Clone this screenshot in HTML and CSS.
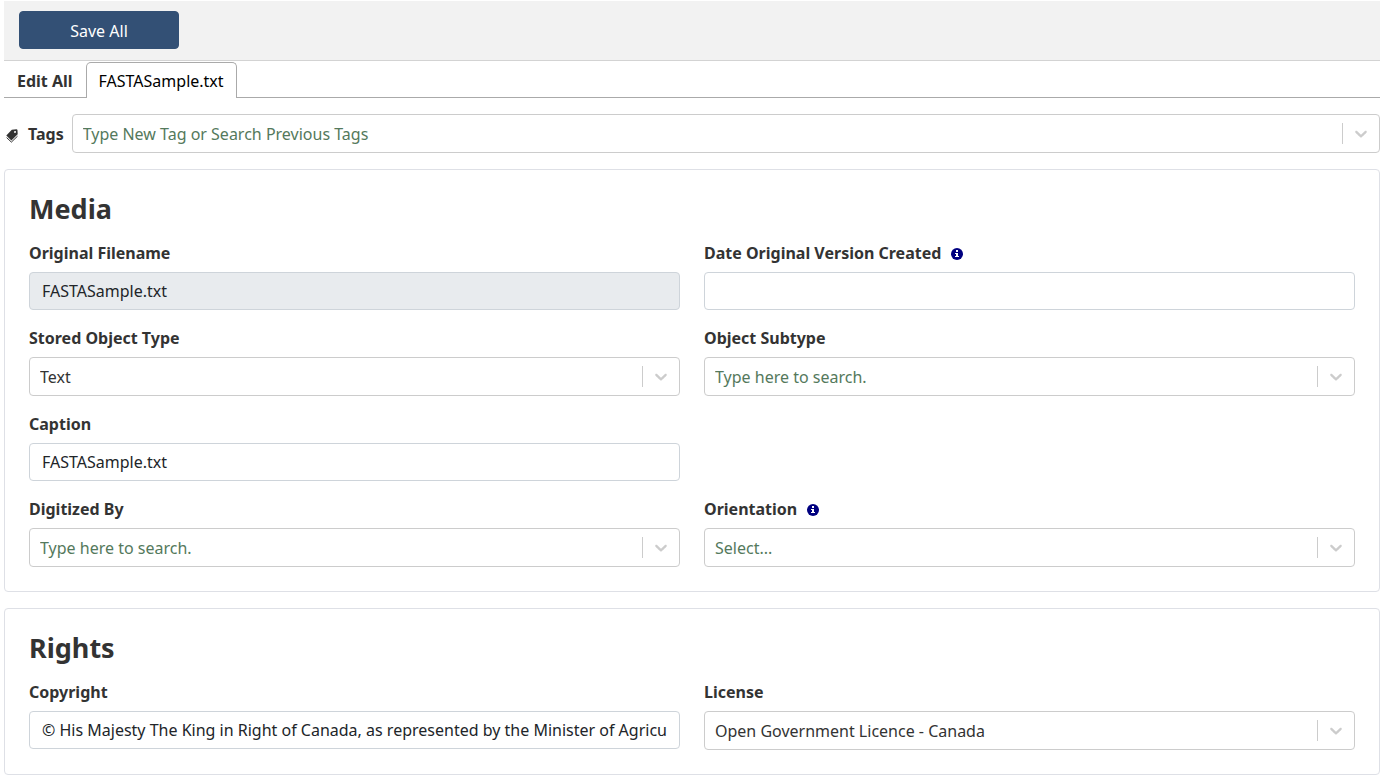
FILE: index.html
```
<!DOCTYPE html>
<html lang="en">
<head>
  <meta charset="utf-8">
  <meta name="viewport" content="width=device-width, initial-scale=1">
  <title>Edit Metadata</title>
  <link rel="stylesheet" href="styles.css">
</head>
<body>
  <svg class="sprite" aria-hidden="true">
    <symbol id="chevron" viewBox="0 0 20 20">
      <path d="M4.516 7.548c0.436-0.446 1.043-0.481 1.576 0l3.908 3.747 3.908-3.747c0.533-0.481 1.141-0.446 1.574 0 0.436 0.445 0.408 1.197 0 1.615-0.406 0.418-4.695 4.502-4.695 4.502-0.217 0.223-0.502 0.335-0.787 0.335s-0.57-0.112-0.789-0.335c0 0-4.287-4.084-4.695-4.502s-0.436-1.17 0-1.615z"/>
    </symbol>
    <symbol id="info" viewBox="0 0 12 12">
      <circle cx="6" cy="6" r="6" fill="#000080"/>
      <path d="M5 2h2v2H5zM4 5h3v3h1v1H4V8h1V6H4z" fill="#fff"/>
    </symbol>
  </svg>

  <header class="toolbar">
    <button class="save" type="button">Save All</button>
  </header>

  <main>
    <div class="tabs" role="tablist">
      <button class="tab tab-all" type="button" role="tab" aria-selected="false">Edit All</button>
      <button class="tab tab-active" type="button" role="tab" aria-selected="true">FASTASample.txt</button>
    </div>

    <div class="tags">
      <svg class="tag-icon" viewBox="0 0 12 14" aria-hidden="true">
        <path fill-rule="evenodd" d="M5.8.7 10.4.2q1 0 1.1 1L11.7 5.2 5.4 11.4.3 6.6zM9 1.9a1 1 0 1 0 .1 2 1 1 0 0 0-.1-2z" fill="#333"/>
        <path d="M.6 8.6 5.4 13.1 11.5 7.2" fill="none" stroke="#333" stroke-width="1"/>
      </svg>
      <label class="label" for="tags">Tags</label>
      <div class="combo">
        <input class="combo-field" id="tags" role="combobox" aria-expanded="false" placeholder="Type New Tag or Search Previous Tags">
        <span class="indicator"><svg class="chevron"><use href="#chevron"/></svg></span>
      </div>
    </div>

    <section class="card">
      <h2 class="title">Media</h2>
      <div class="grid">
        <div class="field">
          <label class="label" for="filename">Original Filename</label>
          <input class="input" id="filename" value="FASTASample.txt" readonly>
        </div>
        <div class="field">
          <div class="label-row">
            <label class="label" for="created">Date Original Version Created</label>
            <svg class="info"><use href="#info"/></svg>
          </div>
          <input class="input" id="created">
        </div>
        <div class="field">
          <label class="label" for="type">Stored Object Type</label>
          <div class="combo">
            <select class="combo-field" id="type"><option>Text</option></select>
            <span class="indicator"><svg class="chevron"><use href="#chevron"/></svg></span>
          </div>
        </div>
        <div class="field">
          <label class="label" for="subtype">Object Subtype</label>
          <div class="combo">
            <input class="combo-field" id="subtype" role="combobox" aria-expanded="false" placeholder="Type here to search.">
            <span class="indicator"><svg class="chevron"><use href="#chevron"/></svg></span>
          </div>
        </div>
        <div class="field field-first">
          <label class="label" for="caption">Caption</label>
          <input class="input" id="caption" value="FASTASample.txt">
        </div>
        <div class="field field-first">
          <label class="label" for="digitized">Digitized By</label>
          <div class="combo">
            <input class="combo-field" id="digitized" role="combobox" aria-expanded="false" placeholder="Type here to search.">
            <span class="indicator"><svg class="chevron"><use href="#chevron"/></svg></span>
          </div>
        </div>
        <div class="field">
          <div class="label-row">
            <label class="label" for="orientation">Orientation</label>
            <svg class="info"><use href="#info"/></svg>
          </div>
          <div class="combo">
            <select class="combo-field combo-empty" id="orientation"><option>Select...</option></select>
            <span class="indicator"><svg class="chevron"><use href="#chevron"/></svg></span>
          </div>
        </div>
      </div>
    </section>

    <section class="card">
      <h2 class="title">Rights</h2>
      <div class="grid">
        <div class="field">
          <label class="label" for="copyright">Copyright</label>
          <input class="input" id="copyright" value="© His Majesty The King in Right of Canada, as represented by the Minister of Agriculture and Agri-Food">
        </div>
        <div class="field">
          <label class="label" for="license">License</label>
          <div class="combo">
            <select class="combo-field" id="license"><option>Open Government Licence - Canada</option></select>
            <span class="indicator"><svg class="chevron"><use href="#chevron"/></svg></span>
          </div>
        </div>
      </div>
    </section>
  </main>
</body>
</html>
```
FILE: styles.css
```
* {
  box-sizing: border-box;
}

body {
  margin: 0;
  padding: 1px 4px 4px;
  background: #fff;
  color: #333;
  font: 16px/24px "Noto Sans", sans-serif;
}

button,
input,
select {
  font: inherit;
}

.sprite {
  display: none;
}

.toolbar {
  padding: 10px 15px 11px;
  background: #f2f2f2;
  border-bottom: 1px solid #d3d3d3;
}

.save {
  display: block;
  width: 160px;
  height: 38px;
  padding: 2px 0 0;
  border: 1px solid #335075;
  border-radius: 4px;
  background: #335075;
  color: #fff;
}

.tabs {
  display: flex;
  margin-top: 1px;
  margin-bottom: 16px;
  border-bottom: 1px solid #aaa;
}

.tab {
  height: 36px;
  margin-bottom: -1px;
  padding: 0 12px;
  border: 1px solid transparent;
  border-bottom: 0;
  border-radius: 5px 5px 0 0;
  background: transparent;
  color: #333;
}

.tab-all {
  font-weight: 700;
}

.tab-active {
  border-color: #aaa;
  background: #fff;
  color: #000;
}

.tags {
  display: flex;
  align-items: center;
  margin-bottom: 16px;
}

.tags .label {
  margin: 0 8px 0 10px;
}

.tags .combo {
  flex: 1;
}

.tag-icon {
  width: 12px;
  height: 14px;
  margin-left: 2px;
  margin-top: 4px;
}

.card {
  margin-bottom: 16px;
  padding: 24px;
  border: 1px solid #dee0e6;
  border-radius: 4px;
}

.title {
  margin: 0 0 17px;
  font-size: 27px;
  line-height: 30px;
}

.grid {
  display: grid;
  grid-template-columns: 1fr 1fr;
  gap: 16px 24px;
}

.field {
  min-width: 0;
}

.field-first {
  grid-column: 1;
}

.label {
  display: block;
  margin-bottom: 7px;
  font-weight: 700;
}

.label-row {
  display: flex;
  align-items: center;
  gap: 10px;
  margin-bottom: 7px;
}

.label-row .label {
  margin: 0;
}

.info {
  width: 12px;
  height: 12px;
  margin-top: 2px;
}

.input {
  display: block;
  width: 100%;
  height: 38px;
  padding: 6px 12px;
  border: 1px solid #ced4da;
  border-radius: 4px;
  background: #fff;
  color: #212529;
}

.input:read-only {
  background: #e8ebee;
}

.combo {
  display: flex;
  align-items: center;
  height: 39px;
  border: 1px solid #ccc;
  border-radius: 4px;
}

.combo-field {
  flex: 1;
  min-width: 0;
  height: 37px;
  padding: 1px 10px 0;
  border: 0;
  background: transparent;
  color: #333;
  appearance: none;
}

.combo-empty,
.combo-field::placeholder {
  color: #54795c;
  opacity: 1;
}

.indicator {
  display: flex;
  padding: 0 8px;
  border-left: 1px solid #ccc;
}

.chevron {
  width: 20px;
  height: 21px;
  fill: #ccc;
}
```
